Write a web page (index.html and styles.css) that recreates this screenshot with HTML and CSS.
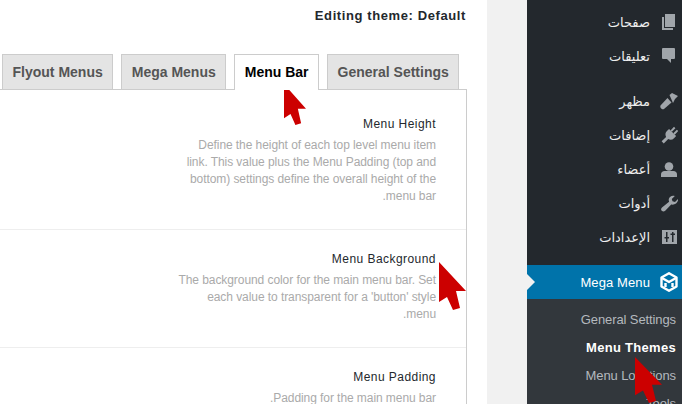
FILE: index.html
```html
<!DOCTYPE html>
<html>
<head>
	<meta charset="utf-8">
	<title>Mega Menu</title>
	<link rel="stylesheet" href="styles.css">
</head>
<body>
	<svg class="defs" width="0" height="0">
		<symbol id="pointer" viewBox="0 0 27 48" preserveAspectRatio="none">
			<path d="M0 0 L27 29 L17 29 L21 46 L14 48 L8 35 L0 40 Z"/>
		</symbol>
	</svg>

	<div class="page">
		<div class="main">
			<div class="editing">Editing theme: Default</div>

			<div class="tabs">
				<div class="tab">Flyout Menus</div>
				<div class="tab">Mega Menus</div>
				<div class="tab active">Menu Bar</div>
				<div class="tab">General Settings</div>
			</div>

			<div class="panel" dir="rtl">
				<div class="row row-first">
					<h4 dir="ltr">Menu Height</h4>
					<p>Define the height of each top level menu item link. This value plus the Menu Padding (top and bottom) settings define the overall height of the menu bar.</p>
				</div>
				<div class="row">
					<h4 dir="ltr">Menu Background</h4>
					<p>The background color for the main menu bar. Set each value to transparent for a 'button' style<br>menu.</p>
				</div>
				<div class="row">
					<h4 dir="ltr">Menu Padding</h4>
					<p>Padding for the main menu bar.</p>
				</div>
			</div>
		</div>

		<div class="gutter"></div>

		<div class="sidebar" dir="rtl">
			<ul class="menu">
				<li>
					<svg class="icon" viewBox="0 0 20 20"><path d="M7 2h10v13H7z"/><path d="M4 5h2v11h9v2H4z"/></svg>
					<span>صفحات</span>
				</li>
				<li>
					<svg class="icon" viewBox="0 0 20 20"><path d="M5 2h11a1 1 0 0 1 1 1v9a1 1 0 0 1-1 1h-3v4l-4-4H5a1 1 0 0 1-1-1V3a1 1 0 0 1 1-1z"/></svg>
					<span>تعليقات</span>
				</li>
				<li class="gap">
					<svg class="icon" viewBox="0 0 20 20"><path d="M11.500 4L14 2l6 3-3 3-2 4z"/><path d="M9.500 7l4 4.500-7.500 6.500c-2 1-4.500-1.500-3.500-3.500z"/></svg>
					<span>مظهر</span>
				</li>
				<li>
					<svg class="icon" viewBox="0 0 20 20"><g transform="rotate(45 10 10) translate(1.500 -1)"><path d="M7 1h2v5H7zM11 1h2v5h-2z"/><path d="M5 6h10v3a5 5 0 0 1-3.500 4.700V20h-3v-6.300A5 5 0 0 1 5 9z"/></g></svg>
					<span>إضافات</span>
				</li>
				<li>
					<svg class="icon" viewBox="0 0 20 20"><circle cx="11" cy="7.500" r="4.300"/><path d="M3 18v-2.500c0-2 1.500-3.500 3.500-3.500h9c2 0 3.500 1.500 3.500 3.500V18z"/></svg>
					<span>أعضاء</span>
				</li>
				<li>
					<svg class="icon" viewBox="0 0 20 20"><path d="M20 6l-3 3-2.500-.7L13.800 6l3-3c-2.500-1-5.500.3-6 3-.2 1 0 2 .3 2.700L4 14.500c-1.500 1.500-1 2.800 0 3.500s2.200.7 3.200-.3l6-6.200c3.500.9 7.500-2 6.800-5.500z"/></svg>
					<span>أدوات</span>
				</li>
				<li>
					<svg class="icon" viewBox="0 0 20 20"><path fill-rule="evenodd" d="M4 3h15v14H4zM8 5v5H6.500v1.500H8V15h1.500v-3.500H11V10H9.500V5zM14 5v1.500h-1.500V8H14v7h1.500V8H17V6.500h-1.500V5z"/></svg>
					<span>الإعدادات</span>
				</li>
				<li class="current">
					<svg class="icon icon-mega" viewBox="0 0 20 20"><path d="M11 1.200l7.500 4.300v9L11 18.800l-7.500-4.300v-9z"/><path d="M4 6l7 4 7-4"/><path d="M7.500 15v-4M14.500 15v-4"/></svg>
					<span>Mega Menu</span>
				</li>
			</ul>
			<ul class="submenu">
				<li>General Settings</li>
				<li class="on">Menu Themes</li>
				<li>Menu Locations</li>
				<li>Tools</li>
			</ul>
		</div>
	</div>

	<svg class="pointer p1"><use href="#pointer"/></svg>
	<svg class="pointer p2"><use href="#pointer"/></svg>
	<svg class="pointer p3"><use href="#pointer"/></svg>
</body>
</html>
```

FILE: styles.css
```css
html, body { margin: 0; padding: 0; height: 100%; overflow: hidden; background: #fff; }
body { font-family: "Liberation Sans", sans-serif; font-size: 12px; }

.defs { position: absolute; }

.page { display: flex; height: 404px; overflow: hidden; }

/* left part, settings */
.main { width: 487px; flex: none; background: #fff; }

.editing {
	height: 54px;
	box-sizing: border-box;
	padding: 8px 21px 0 0;
	text-align: right;
	font-weight: bold;
	font-size: 13px;
	letter-spacing: .6px;
	color: #23282d;
	line-height: 16px;
}

.tabs { display: flex; gap: 8px; padding-left: 2px; height: 35px; position: relative; z-index: 1; }

.tab {
	box-sizing: border-box;
	height: 35px;
	padding: 0 9.5px;
	border: 1px solid #ccc;
	border-bottom: 0;
	background: #e4e4e4;
	color: #555;
	font-weight: bold;
	font-size: 14px;
	line-height: 35px;
}

.tab.active { background: #fff; color: #000; height: 36px; }

.panel {
	width: 467px;
	box-sizing: border-box;
	border-top: 1px solid #ccc;
	border-right: 1px solid #ccc;
	height: 315px;
}

.row { padding: 22px 30px 24px 0; border-bottom: 1px solid #eee; }
.row-first { padding-top: 27px; }

.row h4 {
	margin: 0 0 5px;
	font-weight: normal;
	font-size: 12px;
	letter-spacing: .45px;
	line-height: 15px;
	text-align: right;
	color: #23282d;
}

.row p {
	margin: 0;
	width: 259px;
	font-size: 12px;
	letter-spacing: -.07px;
	line-height: 17px;
	color: #aaa;
}

.gutter { width: 40px; flex: none; background: #f1f1f1; }

/* admin menu */
.sidebar { width: 155px; flex: none; background: #23282d; color: #eee; font-family: "DejaVu Sans", sans-serif; font-size: 13px; }

.menu, .submenu { list-style: none; margin: 0; padding: 0; }

.menu { padding-top: 5px; }

.menu li {
	display: flex;
	align-items: center;
	height: 34px;
	padding-right: 4px;
}
.menu li.gap { margin-top: 11px; }
.menu li span { margin-right: 8px; }

.icon { width: 20px; height: 20px; fill: #a0a5aa; flex: none; }

.menu li.current {
	position: relative;
	background: #0073aa;
	color: #fff;
	margin-top: 11px;
	font-family: "Liberation Sans", sans-serif;
	font-size: 13px;
	letter-spacing: .1px;
}
.menu li.current::after {
	content: "";
	position: absolute;
	left: 0;
	top: 9px;
	border: 8px solid transparent;
	border-left-color: #f1f1f1;
}
.icon-mega { fill: none; stroke: #fff; stroke-width: 2.4; stroke-linejoin: round; }

.submenu {
	background: #32373c;
	padding: 7px 6px 0 0;
	height: 110px;
	font-family: "Liberation Sans", sans-serif;
	font-size: 13px;
	letter-spacing: -.1px;
	color: #b4b9be;
}
.submenu li { height: 28px; line-height: 28px; }
.submenu li.on { color: #fff; font-weight: bold; letter-spacing: .3px; }

/* red pointers over the screenshot */
.pointer { position: absolute; fill: #cc0000; }
.p1 { left: 284px; top: 84px; width: 22px; height: 41px; }
.p2 { left: 439px; top: 262px; width: 27px; height: 48px; }
.p3 { left: 635px; top: 357px; width: 27px; height: 46px; }
```
